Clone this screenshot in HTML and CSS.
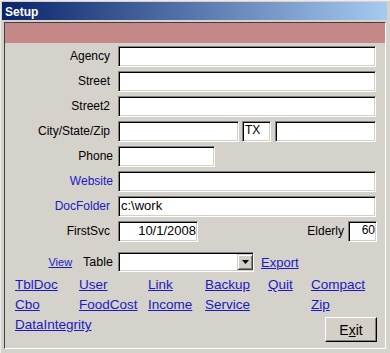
FILE: index.html
```html
<!DOCTYPE html>
<html>
<head>
<meta charset="utf-8">
<title>Setup</title>
<link rel="stylesheet" href="styles.css">
</head>
<body>
<div class="window">
  <div class="titlebar">Setup</div>
  <div class="section">
    <div class="band"></div>
    <div class="detail">
      <div class="form">
        <span class="lbl">Agency</span><div class="field"></div>
        <span class="lbl">Street</span><div class="field"></div>
        <span class="lbl">Street2</span><div class="field"></div>
        <span class="lbl">City/State/Zip</span>
        <div class="group">
          <div class="field city"></div>
          <div class="field state">TX</div>
          <div class="field zip"></div>
        </div>
        <span class="lbl wide">Phone</span><div class="field phone"></div>
        <span class="lbl blue wide">Website</span><div class="field"></div>
        <span class="lbl blue">DocFolder</span><div class="field">c:\work</div>
        <span class="lbl">FirstSvc</span>
        <div class="group">
          <div class="field date">10/1/2008</div>
          <span class="elderly-lbl">Elderly</span>
          <div class="field elderly">60</div>
        </div>
        <div class="table-lbl"><a href="#" class="view">View</a><span class="table-text">Table</span></div>
        <div class="table-row">
          <div class="field combo">
            <span class="combo-btn"><svg width="7" height="4" viewBox="0 0 7 4"><path d="M0 0H7L3.5 4Z" fill="#000"/></svg></span>
          </div>
          <a href="#" class="export">Export</a>
        </div>
      </div>
      <div class="links">
        <a href="#">TblDoc</a>
        <a href="#">User</a>
        <a href="#">Link</a>
        <a href="#">Backup</a>
        <a href="#">Quit</a>
        <a href="#">Compact</a>
        <a href="#">Cbo</a>
        <a href="#">FoodCost</a>
        <a href="#">Income</a>
        <a href="#">Service</a>
        <a href="#" class="col6">Zip</a>
        <a href="#" class="span3">DataIntegrity</a>
        <button class="exit" type="button">E<span class="u">x</span>it</button>
      </div>
    </div>
  </div>
</div>
</body>
</html>
```
FILE: styles.css
```css
body {
  margin: 0;
  background: #d5d1cb;
  font-family: "Liberation Sans", Arial, sans-serif;
}

.window {
  width: 390px;
  height: 353px;
  box-sizing: border-box;
  display: flex;
  flex-direction: column;
  padding-top: 2px;
  background: #d5d1cb;
  border-left: 1px solid #ecebe8;
  border-top: 1px solid #ecebe8;
  padding-top: 1px;
}

.titlebar {
  height: 18px;
  box-sizing: border-box;
  margin: 0 3px 0 1px;
  padding: 1px 0 0 3px;
  display: flex;
  align-items: center;
  background: linear-gradient(to right, #0a246a, #a6caf0);
  color: #fff;
  font-weight: bold;
  font-size: 12px;
}

.section {
  flex: 1;
  margin: 2px 4px 4px 3px;
  border: 1px solid;
  border-color: #404040 #fff #fff #404040;
  display: flex;
  flex-direction: column;
}

.band {
  height: 20px;
  background: #c48888;
}

.detail {
  padding: 3px 9px 0 0;
}

.form {
  display: grid;
  grid-template-columns: 105px 1fr;
  column-gap: 8px;
  row-gap: 4px;
}

.lbl {
  font-size: 12px;
  line-height: 21px;
  text-align: right;
  color: #000;
  white-space: nowrap;
}

.lbl.wide {
  margin-right: -3px;
}

.lbl.blue {
  color: #1a1ac4;
}

.field {
  height: 21px;
  box-sizing: border-box;
  background: #fff;
  border: 1px solid;
  border-color: #808080 #fff #fff #808080;
  box-shadow: inset 1px 1px 0 #000, inset -1px -1px 0 #d4d0c8;
  font-size: 13px;
  line-height: 15px;
  padding: 1px 1px 0 2px;
  color: #000;
  white-space: nowrap;
}

.group {
  display: flex;
}

.city {
  width: 121px;
}

.state {
  width: 29px;
  margin-left: 3px;
  font-size: 12px;
}

.zip {
  flex: 1;
  margin-left: 4px;
}

.phone {
  width: 97px;
  justify-self: start;
}

.date {
  width: 80px;
  text-align: right;
}

.elderly-lbl {
  margin-left: auto;
  font-size: 12px;
  line-height: 21px;
}

.elderly {
  width: 29px;
  margin-left: 4px;
  margin-right: -1px;
  text-align: right;
  font-size: 12px;
}

.table-lbl {
  margin-top: 6px;
  margin-right: -3px;
  display: flex;
  justify-content: flex-end;
  align-items: baseline;
  gap: 11px;
  line-height: 20px;
}

.view {
  font-size: 11px;
  color: #1a1ac4;
}

.table-text {
  font-size: 12.5px;
  color: #000;
}

.table-row {
  margin-top: 6px;
  display: flex;
  align-items: center;
}

.combo {
  width: 136px;
  height: 20px;
  padding: 0;
  display: flex;
  align-items: center;
  justify-content: flex-end;
}

.combo-btn {
  width: 16px;
  height: 16px;
  box-sizing: border-box;
  background: #d4d0c8;
  border: 1px solid;
  border-color: #d4d0c8 #404040 #404040 #d4d0c8;
  box-shadow: inset 1px 1px 0 #fff, inset -1px -1px 0 #808080;
  display: flex;
  align-items: center;
  justify-content: center;
}

.export {
  margin-left: 7px;
  font-size: 13px;
  color: #1a1ac4;
}

a {
  color: #1a1ac4;
  text-decoration: underline;
}

.links {
  margin-top: 3px;
  padding-left: 10px;
  display: grid;
  grid-template-columns: 64px 69px 57px 63px 43px 1fr;
  grid-template-rows: 20px 20px 20px;
  font-size: 13.5px;
  line-height: 20px;
}

.links a {
  justify-self: start;
  white-space: nowrap;
}

.links .col6 {
  grid-column: 6;
}

.links .span3 {
  grid-column: 1 / span 3;
}

.exit {
  grid-column: 6;
  grid-row: 3;
  align-self: start;
  justify-self: start;
  margin: 2px 0 0 14px;
  width: 52px;
  height: 25px;
  padding: 0;
  background: #d4d0c8;
  border: 1px solid;
  border-color: #fff #000 #000 #fff;
  box-shadow: inset -1px -1px 0 #808080;
  font-family: "Liberation Sans", Arial, sans-serif;
  font-size: 14px;
  color: #000;
  display: flex;
  align-items: center;
  justify-content: center;
}

.u {
  text-decoration: underline;
}
```
